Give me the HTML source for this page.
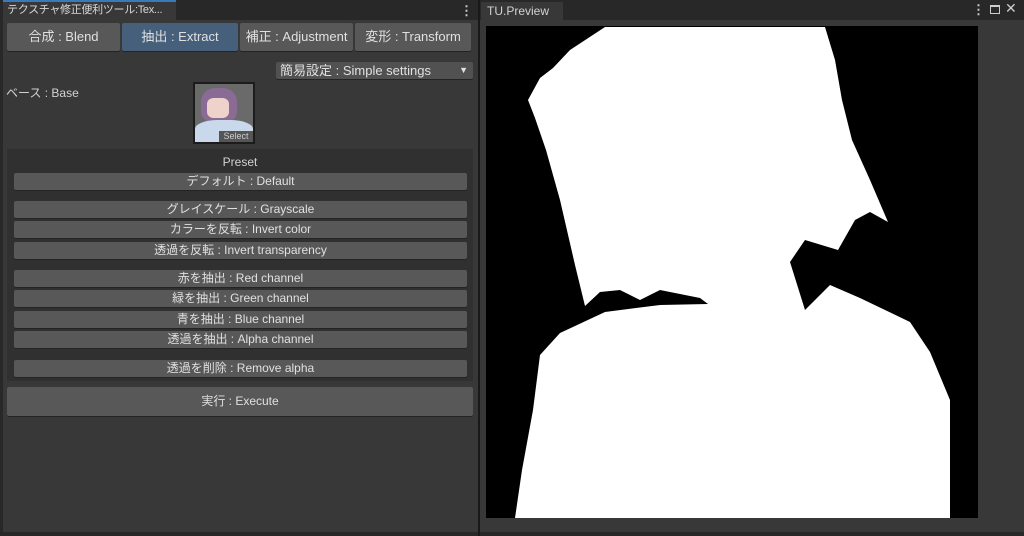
<!DOCTYPE html>
<html><head><meta charset="utf-8"><style>
*{box-sizing:border-box;margin:0;padding:0}
body{width:1024px;height:536px;background:#191919;font-family:"Liberation Sans","Noto Sans CJK JP",sans-serif;color:#d2d2d2;font-size:12px;position:relative;overflow:hidden}
.abs{position:absolute}
.btn{position:absolute;background:#585858;border-radius:2px;text-align:center;color:#e0e0e0;box-shadow:0 1px 0 #242424;white-space:nowrap}
</style></head><body>
<div class="abs" style="left:0;top:0;width:478px;height:536px;background:#282828"></div>
<div class="abs" style="left:3px;top:0;width:173px;height:20px;background:#383838;border-top:2px solid #3a79bb;font-size:11px;line-height:17px;padding-left:4px;color:#d8d8d8;white-space:nowrap;overflow:hidden;letter-spacing:-0.3px">テクスチャ修正便利ツール:Tex...</div>
<div class="abs" style="left:460px;top:3px;color:#ccc;font-size:13px;font-weight:bold">⋮</div>
<div class="abs" style="left:3px;top:20px;width:475px;height:512px;background:#383838"></div>
<div class="btn" style="left:7px;top:23px;width:113px;height:28px;line-height:28px;font-size:13px">合成 : Blend</div>
<div class="btn" style="left:122px;top:23px;width:116px;height:28px;line-height:28px;font-size:13px;background:#46607c">抽出 : Extract</div>
<div class="btn" style="left:240px;top:23px;width:113px;height:28px;line-height:28px;font-size:13px">補正 : Adjustment</div>
<div class="btn" style="left:355px;top:23px;width:116px;height:28px;line-height:28px;font-size:13px">変形 : Transform</div>
<div class="btn" style="left:276px;top:62px;width:197px;height:17px;line-height:17px;text-align:left;padding-left:4px;font-size:13px;background:#515151">簡易設定 : Simple settings<span style="position:absolute;right:5px;top:0;font-size:9px">▼</span></div>
<div class="abs" style="left:6px;top:84px;font-size:12px">ベース : Base</div>
<div class="abs" style="left:193px;top:82px;width:62px;height:62px;background:#1c1c1c;padding:2px">
<div style="width:58px;height:58px;background:#6a6a6a;position:relative;overflow:hidden">
<div class="abs" style="left:6px;top:4px;width:36px;height:34px;background:#8a6b95;border-radius:40% 40% 30% 30%"></div>
<div class="abs" style="left:12px;top:14px;width:22px;height:20px;background:#f0d2cc;border-radius:30%"></div>
<div class="abs" style="left:0;top:36px;width:58px;height:22px;background:#c9d8ea;border-radius:40% 40% 0 0"></div>
<div class="abs" style="right:0;bottom:0;width:34px;height:11px;background:#555;font-size:9px;line-height:11px;text-align:center;color:#ccc">Select</div>
</div></div>
<div class="abs" style="left:7px;top:149px;width:466px;height:232px;background:#303030"></div>
<div class="abs" style="left:7px;top:155px;width:466px;text-align:center;font-size:12px">Preset</div>
<div class="btn" style="left:14px;top:173px;width:453px;height:17px;line-height:17px">デフォルト : Default</div>
<div class="btn" style="left:14px;top:201px;width:453px;height:17px;line-height:17px">グレイスケール : Grayscale</div>
<div class="btn" style="left:14px;top:221px;width:453px;height:17px;line-height:17px">カラーを反転 : Invert color</div>
<div class="btn" style="left:14px;top:242px;width:453px;height:17px;line-height:17px">透過を反転 : Invert transparency</div>
<div class="btn" style="left:14px;top:270px;width:453px;height:17px;line-height:17px">赤を抽出 : Red channel</div>
<div class="btn" style="left:14px;top:290px;width:453px;height:17px;line-height:17px">緑を抽出 : Green channel</div>
<div class="btn" style="left:14px;top:311px;width:453px;height:17px;line-height:17px">青を抽出 : Blue channel</div>
<div class="btn" style="left:14px;top:331px;width:453px;height:17px;line-height:17px">透過を抽出 : Alpha channel</div>
<div class="btn" style="left:14px;top:360px;width:453px;height:17px;line-height:17px">透過を削除 : Remove alpha</div>
<div class="btn" style="left:7px;top:387px;width:466px;height:29px;line-height:29px;font-size:12px">実行 : Execute</div>
<div class="abs" style="left:480px;top:0;width:544px;height:536px;background:#282828"></div>
<div class="abs" style="left:481px;top:2px;width:82px;height:18px;background:#383838;font-size:12px;line-height:18px;padding-left:6px">TU.Preview</div>
<div class="abs" style="left:972px;top:2px;font-size:13px;color:#ccc;font-weight:bold">⋮</div>
<div class="abs" style="left:990px;top:5px;width:10px;height:9px;border:1px solid #ccc;border-top-width:2px"></div>
<div class="abs" style="left:1005px;top:0px;font-size:14px;color:#ccc">✕</div>
<div class="abs" style="left:480px;top:20px;width:544px;height:512px;background:#383838"></div>
<svg class="abs" style="left:0;top:0" width="1024" height="536">
<rect x="486" y="26" width="492" height="492" fill="#000"/>
<polygon fill="#fff" points="540,78 553,68 570,50 605,27 825,27 835,60 842,100 852,140 870,180 888,222 870,212 855,220 838,250 805,240 790,262 805,310 830,285 860,298 910,322 930,352 950,400 950,518 515,518 522,470 533,410 540,355 560,333 605,312 660,305 708,304 700,298 660,290 640,300 620,290 600,292 585,306 575,265 560,200 546,150 535,118 528,100"/>
</svg>
</body></html>
